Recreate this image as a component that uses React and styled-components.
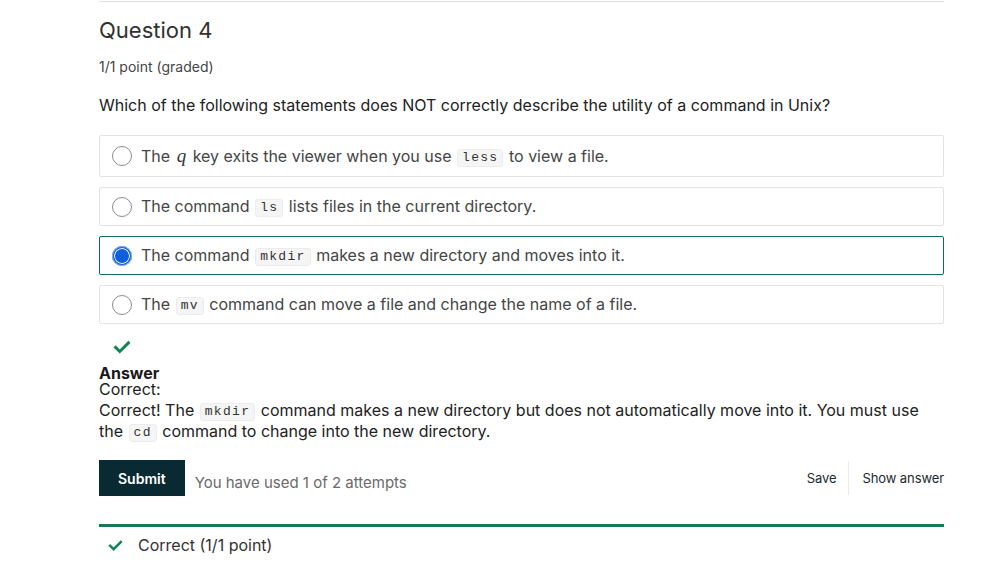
import React, { useState } from "react";
import styled, { createGlobalStyle } from "styled-components";

const GlobalStyle = createGlobalStyle`
  html, body {
    margin: 0;
    padding: 0;
    background: #fff;
  }
  body {
    font-family: Inter, "Noto Sans", sans-serif;
    color: #454545;
  }
`;

const Page = styled.div`
  width: 845px;
  margin: 1px 0 0 99px;
  border-top: 1px solid #e2e2e2;
`;

const Title = styled.h3`
  margin: 14px 0 0;
  font-size: 22px;
  font-weight: 400;
  line-height: 28px;
  color: #313131;
`;

const Points = styled.div`
  margin-top: 13px;
  font-size: 14px;
  line-height: 20px;
  color: #454545;
`;

const Prompt = styled.p`
  margin: 17px 0 0;
  font-size: 16px;
  line-height: 22px;
  color: #222;
`;

const Choices = styled.div`
  margin-top: 19px;
  display: flex;
  flex-direction: column;
  gap: 10px;
`;

const Choice = styled.label`
  display: flex;
  align-items: center;
  gap: 9px;
  min-height: ${(p) => (p.$tall ? 40 : 37)}px;
  padding: 0 12px;
  border: 1px solid ${(p) => (p.$selected ? "#0e6b64" : "#e3e3e3")};
  border-radius: 2px;
  font-size: 16px;
  color: #454545;
  cursor: pointer;
`;

const Radio = styled.span`
  flex: none;
  width: 20px;
  height: 20px;
  border-radius: 50%;
  box-sizing: border-box;
  border: ${(p) => (p.$checked ? "2px solid #0d5fdc" : "1px solid #8d8d8d")};
  background: ${(p) => (p.$checked ? "#0d5fdc" : "#fff")};
  box-shadow: ${(p) => (p.$checked ? "inset 0 0 0 1px #fff" : "none")};
  outline: ${(p) => (p.$checked ? "1px solid #8fb2ee" : "none")};
  outline-offset: -1px;
`;

const Code = styled.code`
  display: inline-block;
  margin: 0 1px;
  padding: 0 4px;
  font-family: "Liberation Mono", "DejaVu Sans Mono", monospace;
  font-size: 13px;
  letter-spacing: 1.3px;
  line-height: 16px;
  color: #333;
  background: #f5f5f5;
  border: 1px solid #ececec;
  border-radius: 3px;
  vertical-align: 1px;
`;

const MathVar = styled.i`
  font-family: "Liberation Serif", "DejaVu Serif", serif;
  font-size: 19px;
  margin: 0 2px;
  color: #333;
`;

const Text = styled.span``;

const Feedback = styled.div`
  margin-top: 14px;
  font-size: 16px;
  line-height: 21px;
  color: #222;
`;

const Check = styled.svg`
  display: block;
  flex: none;
  margin: ${(p) => (p.$inline ? "0" : "0 0 6px 14px")};
  width: ${(p) => p.$size}px;
  height: ${(p) => p.$size}px;
  color: #178254;
`;

const AnswerLabel = styled.div`
  margin-top: 12px;
  font-weight: 700;
  color: #1a1a1a;
  line-height: 11px;
`;

const ActionBar = styled.div`
  margin-top: 18px;
  display: flex;
  align-items: center;
`;

const SubmitButton = styled.button`
  height: 36px;
  padding: 0 19px;
  border: 0;
  border-radius: 0;
  background: #0a2a33;
  color: #fff;
  font-family: Inter, sans-serif;
  font-size: 14px;
  font-weight: 600;
  cursor: pointer;
`;

const Attempts = styled.span`
  margin: 8px 0 0 10px;
  font-size: 15px;
  color: #6b6b6b;
`;

const Spacer = styled.div`
  flex: 1;
`;

const LinkButton = styled.button`
  border: 0;
  background: none;
  padding: 9px 0 9px ${(p) => (p.$divided ? 13 : 0)}px;
  margin-right: ${(p) => (p.$divided ? 0 : 12)}px;
  border-left: ${(p) => (p.$divided ? "1px solid #ebebeb" : "0")};
  font-family: Inter, sans-serif;
  font-size: 13px;
  letter-spacing: -0.1px;
  color: #1d2a30;
  cursor: pointer;
`;

const Status = styled.div`
  margin-top: 28px;
  border-top: 3px solid #187a55;
  padding: 8px 0 0 9px;
  display: flex;
  align-items: center;
  gap: 15px;
  font-size: 16px;
  line-height: 20px;
  color: #333;
`;

const CheckIcon = ({ size, inline }) => (
  <Check $size={size} $inline={inline} viewBox="0 0 24 24" fill="none">
    <path
      d="M3.5 12.5l5.5 5.5L20.5 6.5"
      stroke="currentColor"
      strokeWidth="4"
      strokeLinecap="square"
    />
  </Check>
);

const choices = [
  {
    id: "a",
    tall: true,
    body: (
      <>
        The <MathVar>q</MathVar> key exits the viewer when you use <Code>less</Code> to view a file.
      </>
    ),
  },
  {
    id: "b",
    body: (
      <>
        The command <Code>ls</Code> lists files in the current directory.
      </>
    ),
  },
  {
    id: "c",
    body: (
      <>
        The command <Code>mkdir</Code> makes a new directory and moves into it.
      </>
    ),
  },
  {
    id: "d",
    body: (
      <>
        The <Code>mv</Code> command can move a file and change the name of a file.
      </>
    ),
  },
];

export default function App() {
  const [selected, setSelected] = useState("c");
  return (
    <>
      <GlobalStyle />
      <Page>
        <Title>Question 4</Title>
        <Points>1/1 point (graded)</Points>
        <Prompt>
          Which of the following statements does NOT correctly describe the utility of a command in Unix?
        </Prompt>
        <Choices>
          {choices.map((c) => (
            <Choice
              key={c.id}
              $tall={c.tall}
              $selected={selected === c.id}
              onClick={() => setSelected(c.id)}
            >
              <Radio $checked={selected === c.id} />
              <Text>{c.body}</Text>
            </Choice>
          ))}
        </Choices>
        <Feedback>
          <CheckIcon size={18} />
          <AnswerLabel>Answer</AnswerLabel>
          <div>Correct:</div>
          <div>
            Correct! The <Code>mkdir</Code> command makes a new directory but does not automatically move
            into it. You must use the <Code>cd</Code> command to change into the new directory.
          </div>
        </Feedback>
        <ActionBar>
          <SubmitButton>Submit</SubmitButton>
          <Attempts>You have used 1 of 2 attempts</Attempts>
          <Spacer />
          <LinkButton>Save</LinkButton>
          <LinkButton $divided>Show answer</LinkButton>
        </ActionBar>
        <Status>
          <CheckIcon size={15} inline />
          Correct (1/1 point)
        </Status>
      </Page>
    </>
  );
}
